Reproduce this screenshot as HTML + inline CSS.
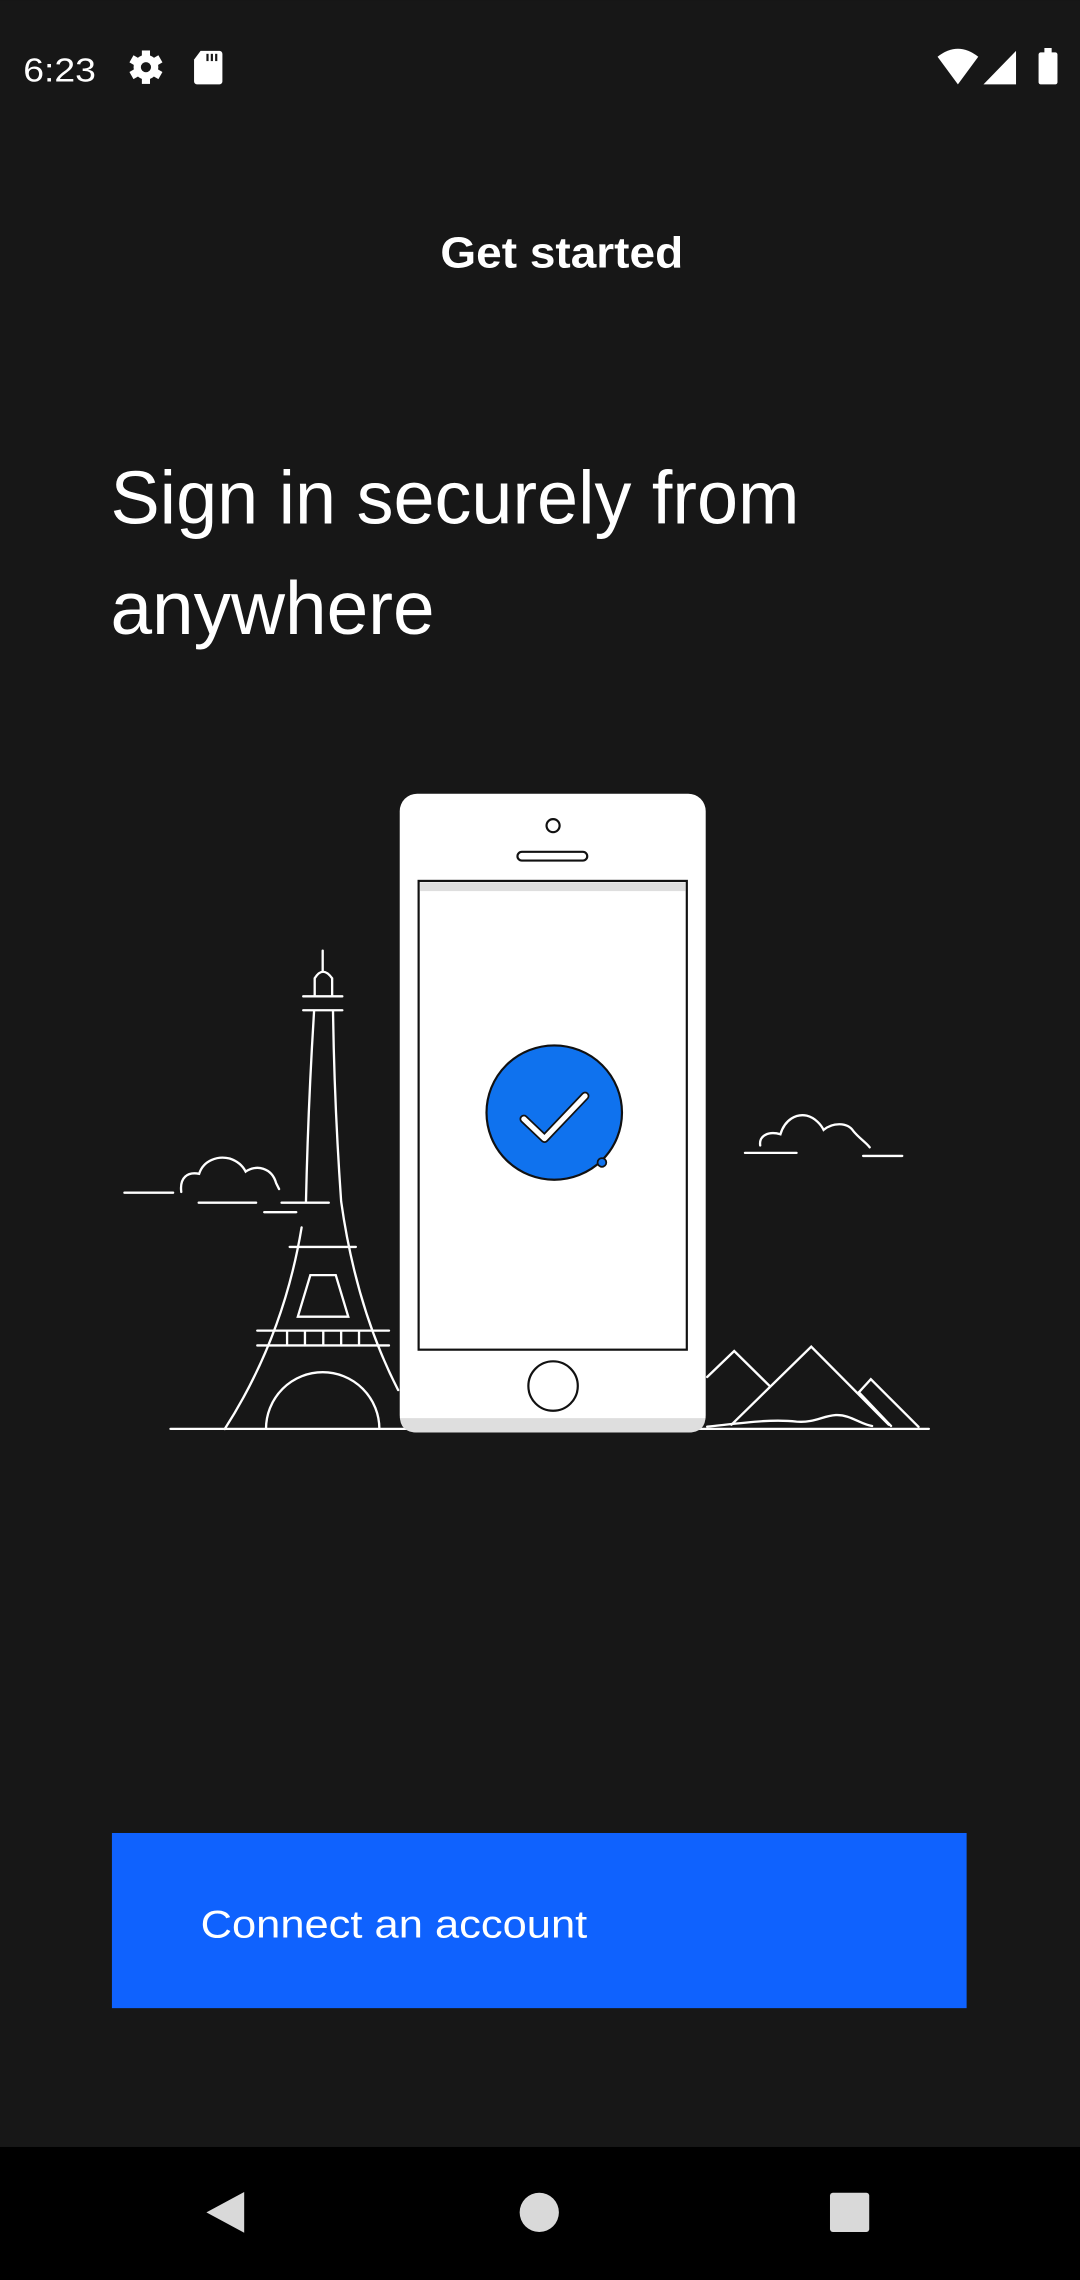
<!DOCTYPE html>
<html><head><meta charset="utf-8"><style>
html,body{margin:0;padding:0;background:#171717;}
svg{display:block}
</style></head><body>
<svg width="1080" height="2280" viewBox="0 0 743 1568.5" xmlns="http://www.w3.org/2000/svg" font-family="Liberation Sans, sans-serif">
<rect width="743" height="1568.5" fill="#171717"/>
<!-- status bar -->
<text x="16" y="56" font-size="23" fill="#fff" textLength="50" lengthAdjust="spacingAndGlyphs">6:23</text>
<g transform="translate(100.4,46.2)" fill="#fff">
  <circle r="8.5"/>
  <g><rect x="-2.8" y="-11.5" width="5.6" height="23"/><rect x="-2.8" y="-11.5" width="5.6" height="23" transform="rotate(60)"/><rect x="-2.8" y="-11.5" width="5.6" height="23" transform="rotate(120)"/></g>
  <circle r="3.5" fill="#171717"/>
</g>
<path d="M138,35 H151 a2,2 0 0 1 2,2 V56 a2,2 0 0 1 -2,2 H135.5 a2,2 0 0 1 -2,-2 V41 Z" fill="#fff"/>
<rect x="142" y="37" width="1.5" height="5" fill="#171717"/><rect x="145" y="37" width="1.5" height="5" fill="#171717"/><rect x="148" y="37" width="1.5" height="5" fill="#171717"/>
<path d="M645,39 Q659,28 673,39 L659,58 Z" fill="#fff"/>
<path d="M676.6,58 L699,35 V58 Z" fill="#fff"/>
<rect x="714.5" y="36" width="13" height="22" rx="1.5" fill="#fff"/><rect x="718.5" y="33" width="5" height="4" fill="#fff"/>
<!-- title -->
<text x="386.5" y="184" font-size="30" font-weight="bold" fill="#fff" text-anchor="middle" textLength="167" lengthAdjust="spacingAndGlyphs">Get started</text>
<text x="76" y="360" font-size="52" fill="#fff" textLength="474" lengthAdjust="spacingAndGlyphs">Sign in securely from</text>
<text x="76" y="436" font-size="52" fill="#fff" textLength="223" lengthAdjust="spacingAndGlyphs">anywhere</text>
<!-- illustration -->
<g fill="none" stroke="#fff" stroke-width="1.6" stroke-linecap="round">
  <!-- ground -->
  <line x1="117.3" y1="983" x2="280" y2="983"/>
  <line x1="479" y1="983" x2="639" y2="983"/>
  <!-- eiffel -->
  <line x1="222" y1="654" x2="222" y2="668"/>
  <path d="M216.5,685 V673 Q222,664 228.5,673 V685"/>
  <line x1="208.6" y1="685.4" x2="235.5" y2="685.4"/>
  <line x1="208.6" y1="695" x2="235.5" y2="695"/>
  <path d="M216.1,695.3 Q212,760 210.5,826.5"/>
  <path d="M229.1,695.3 Q230,760 234.7,826.5 Q245,900 273.9,956.3"/>
  <path d="M207.5,844.4 Q195,920 154.6,983.1"/>
  <line x1="199.3" y1="857.8" x2="244.8" y2="857.8"/>
  <path d="M213.5,877.2 H231 L239.6,905.8 H204.9 Z"/>
  <line x1="177" y1="915.4" x2="267.6" y2="915.4"/>
  <line x1="177" y1="925.6" x2="267.6" y2="925.6"/>
  <path d="M197.5,915.4V925.6M209.8,915.4V925.6M222.4,915.4V925.6M234.7,915.4V925.6M247,915.4V925.6"/>
  <path d="M183,983 A39,39 0 0 1 261,983"/>
  <!-- left cloud -->
  <line x1="85.6" y1="820.5" x2="119.1" y2="820.5"/>
  <path d="M124.7,820 C123.5,810 129,806 137,807.5 C140,798 150,795 158,797 C164,799 167,802 169,806 C176,801 187,803 190,814 L192,818"/>
  <line x1="136.7" y1="827.4" x2="176.2" y2="827.4"/>
  <line x1="193.7" y1="827.4" x2="226.2" y2="827.4"/>
  <line x1="181.8" y1="833.9" x2="203.8" y2="833.9"/>
  <!-- right cloud -->
  <line x1="512.5" y1="793.1" x2="548" y2="793.1"/>
  <line x1="593.8" y1="795.2" x2="620.7" y2="795.2"/>
  <path d="M523,788 C522,781 529,778 536.9,780.3 C540,770 548,766 555,767.5 C561,769 565,774 566.6,777.3 C573,772 583,772 587,778 C591,783 596,786 598.3,789.3"/>
  <!-- mountains -->
  <path d="M486.5,947.3 L505.1,929.4 L529.3,953.3"/>
  <path d="M503.2,980.1 L558.1,926.4 L611.4,980.1"/>
  <path d="M590.9,957.8 L599.1,948.8 L631.9,981.6"/>
  <path d="M590.9,957.8 L613,981"/>
  <path d="M486.5,981.5 C510,979 530,976 548,978 C560,979 566,974 575,973.5 C585,973 592,980 600,981"/>
</g>
<!-- phone -->
<rect x="275" y="546" width="210.5" height="439.5" rx="12" fill="#fff"/>
<path d="M275,975.6 H485.5 V973.5 a12,12 0 0 1 0,0 V975.6 a0,0 0 0 1 0,0 V973.5 Z" fill="none"/>
<path d="M275,975.6 H485.5 V973.5 Q485.5,985.5 473.5,985.5 H287 Q275,985.5 275,973.5 Z" fill="#dedede"/>
<circle cx="380.5" cy="568" r="4.5" fill="none" stroke="#111" stroke-width="1.5"/>
<rect x="356" y="586" width="48" height="6" rx="3" fill="none" stroke="#111" stroke-width="1.5"/>
<rect x="288" y="606" width="184.5" height="322.5" fill="#fff" stroke="#111" stroke-width="1.5"/>
<rect x="289" y="607" width="182.5" height="6" fill="#dedede"/>
<circle cx="380.5" cy="953.5" r="17" fill="none" stroke="#111" stroke-width="1.5"/>
<ellipse cx="381.3" cy="765.4" rx="46.6" ry="46.2" fill="#0f72ee" stroke="#111" stroke-width="1.5"/>
<path d="M360.4,769.8 L374.6,783.3 L402.5,754" fill="none" stroke="#111" stroke-width="6" stroke-linecap="round" stroke-linejoin="round"/>
<path d="M360.4,769.8 L374.6,783.3 L402.5,754" fill="none" stroke="#fff" stroke-width="3.6" stroke-linecap="round" stroke-linejoin="round"/>
<circle cx="414.1" cy="799.7" r="3" fill="#0f72ee" stroke="#111" stroke-width="1.2"/>
<!-- button -->
<rect x="77" y="1261" width="588" height="120.5" fill="#0f62fe"/>
<text x="138" y="1333" font-size="27" fill="#fff" textLength="266" lengthAdjust="spacingAndGlyphs">Connect an account</text>
<!-- nav bar -->
<rect x="0" y="1477" width="743" height="92" fill="#000"/>
<path d="M168,1508 V1536 L142,1522 Z" fill="#d9d9d9"/>
<circle cx="371" cy="1522" r="13.5" fill="#d9d9d9"/>
<rect x="571" y="1508.5" width="27" height="27" rx="2" fill="#d9d9d9"/>
</svg>
</body></html>
